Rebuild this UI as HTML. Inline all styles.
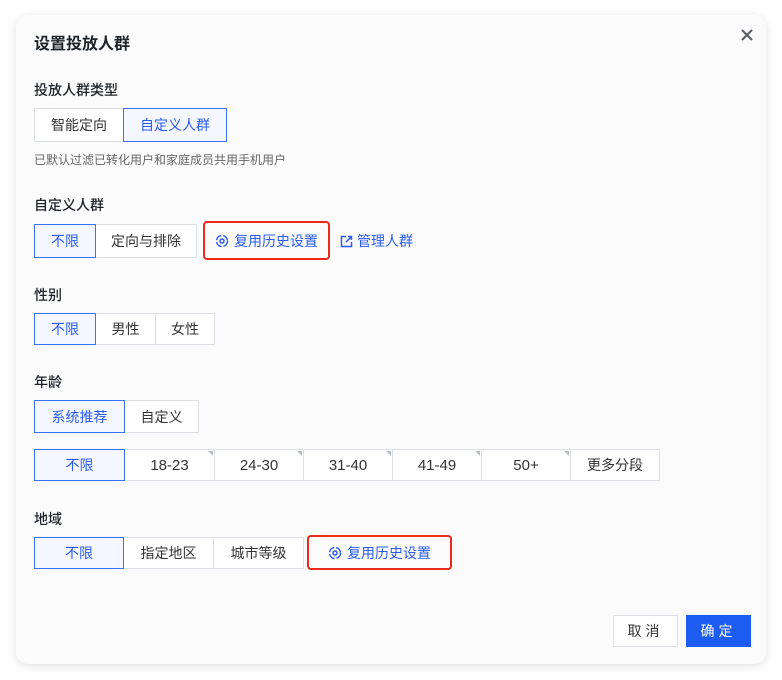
<!DOCTYPE html>
<html><head><meta charset="utf-8"><style>
body{margin:0;width:782px;height:680px;background:#fff;font-family:"Liberation Sans","Noto Sans CJK SC",sans-serif;position:relative;overflow:hidden}
.dlg{position:absolute;left:16px;top:15px;width:750px;height:649px;background:#fbfbfc;border-radius:12px;box-shadow:0 2px 10px rgba(0,0,0,.12)}
.a{position:absolute}
.lbl{position:absolute;left:34px;font-size:14px;color:#1f2329;font-weight:500}
.b{position:absolute;box-sizing:border-box;border:1px solid #dcdfe4;background:#fff;font-size:14px;color:#333;display:flex;align-items:center;justify-content:center}
.n{font-size:15px}
.s{border-color:#3b6ff5;color:#2a5cf0;background:#f4f7ff;z-index:2}
.red{position:absolute;border:2px solid #ea2a1e;border-radius:4px;box-sizing:border-box;display:flex;align-items:center;justify-content:center;color:#2a5cf0;font-size:14px}
.tri{position:absolute;right:1px;top:1px;width:0;height:0;border-left:5px solid transparent;border-top:5px solid #b8bcc4}
</style></head><body>
<div class="dlg"></div>
<div class="a" style="left:34px;top:30px;font-size:16px;font-weight:bold;color:#1f2329">设置投放人群</div>
<svg class="a" style="left:740px;top:28px" width="14" height="14"><path d="M2 2L12 12M12 2L2 12" stroke="#5a5e66" stroke-width="2.2"/></svg>
<div class="lbl" style="top:80px">投放人群类型</div>
<div class="b" style="left:34px;top:108px;width:90px;height:34px">智能定向</div>
<div class="b s" style="left:123px;top:108px;width:104px;height:34px">自定义人群</div>
<div class="a" style="left:34px;top:151px;font-size:12px;color:#666">已默认过滤已转化用户和家庭成员共用手机用户</div>
<div class="lbl" style="top:195px">自定义人群</div>
<div class="b s" style="left:34px;top:224px;width:62px;height:34px">不限</div>
<div class="b" style="left:95px;top:224px;width:102px;height:34px">定向与排除</div>
<div class="red" style="left:203px;top:221px;width:127px;height:39px"><svg width="14" height="14" style="margin-right:5px"><circle cx="7" cy="7" r="5.5" fill="none" stroke="#2a5cf0" stroke-width="1.5" stroke-dasharray="7 2"/><circle cx="7" cy="7" r="2" fill="none" stroke="#2a5cf0" stroke-width="1.5"/></svg>复用历史设置</div>
<div class="a" style="left:340px;top:231px;font-size:14px;color:#2a5cf0;display:flex;align-items:center"><svg width="13" height="13" style="margin-right:4px"><path d="M6 1.5H1.5V11.5H11.5V7M8 1.5H11.5V5M11.5 1.5L6 7" fill="none" stroke="#2a5cf0" stroke-width="1.5"/></svg>管理人群</div>
<div class="lbl" style="top:285px">性别</div>
<div class="b s" style="left:34px;top:313px;width:62px;height:32px">不限</div>
<div class="b" style="left:95px;top:313px;width:61px;height:32px">男性</div>
<div class="b" style="left:155px;top:313px;width:60px;height:32px">女性</div>
<div class="lbl" style="top:372px">年龄</div>
<div class="b s" style="left:34px;top:400px;width:91px;height:33px">系统推荐</div>
<div class="b" style="left:124px;top:400px;width:75px;height:33px">自定义</div>
<div class="b s" style="left:34px;top:449px;width:91px;height:32px">不限</div>
<div class="b n" style="left:124px;top:449px;width:91px;height:32px">18-23<i class="tri"></i></div>
<div class="b n" style="left:214px;top:449px;width:90px;height:32px">24-30<i class="tri"></i></div>
<div class="b n" style="left:303px;top:449px;width:90px;height:32px">31-40<i class="tri"></i></div>
<div class="b n" style="left:392px;top:449px;width:90px;height:32px">41-49<i class="tri"></i></div>
<div class="b n" style="left:481px;top:449px;width:90px;height:32px">50+<i class="tri"></i></div>
<div class="b" style="left:570px;top:449px;width:90px;height:32px">更多分段</div>
<div class="lbl" style="top:509px">地域</div>
<div class="b s" style="left:34px;top:537px;width:90px;height:32px">不限</div>
<div class="b" style="left:123px;top:537px;width:91px;height:32px">指定地区</div>
<div class="b" style="left:213px;top:537px;width:91px;height:32px">城市等级</div>
<div class="red" style="left:307px;top:535px;width:145px;height:35px"><svg width="14" height="14" style="margin-right:5px"><circle cx="7" cy="7" r="5.5" fill="none" stroke="#2a5cf0" stroke-width="1.5" stroke-dasharray="7 2"/><circle cx="7" cy="7" r="2" fill="none" stroke="#2a5cf0" stroke-width="1.5"/></svg>复用历史设置</div>
<div class="b" style="left:613px;top:615px;width:65px;height:32px;letter-spacing:4px">取消</div>
<div class="b" style="left:686px;top:615px;width:65px;height:32px;background:#1d5cf0;border-color:#1d5cf0;color:#fff;letter-spacing:4px">确定</div>
</body></html>
